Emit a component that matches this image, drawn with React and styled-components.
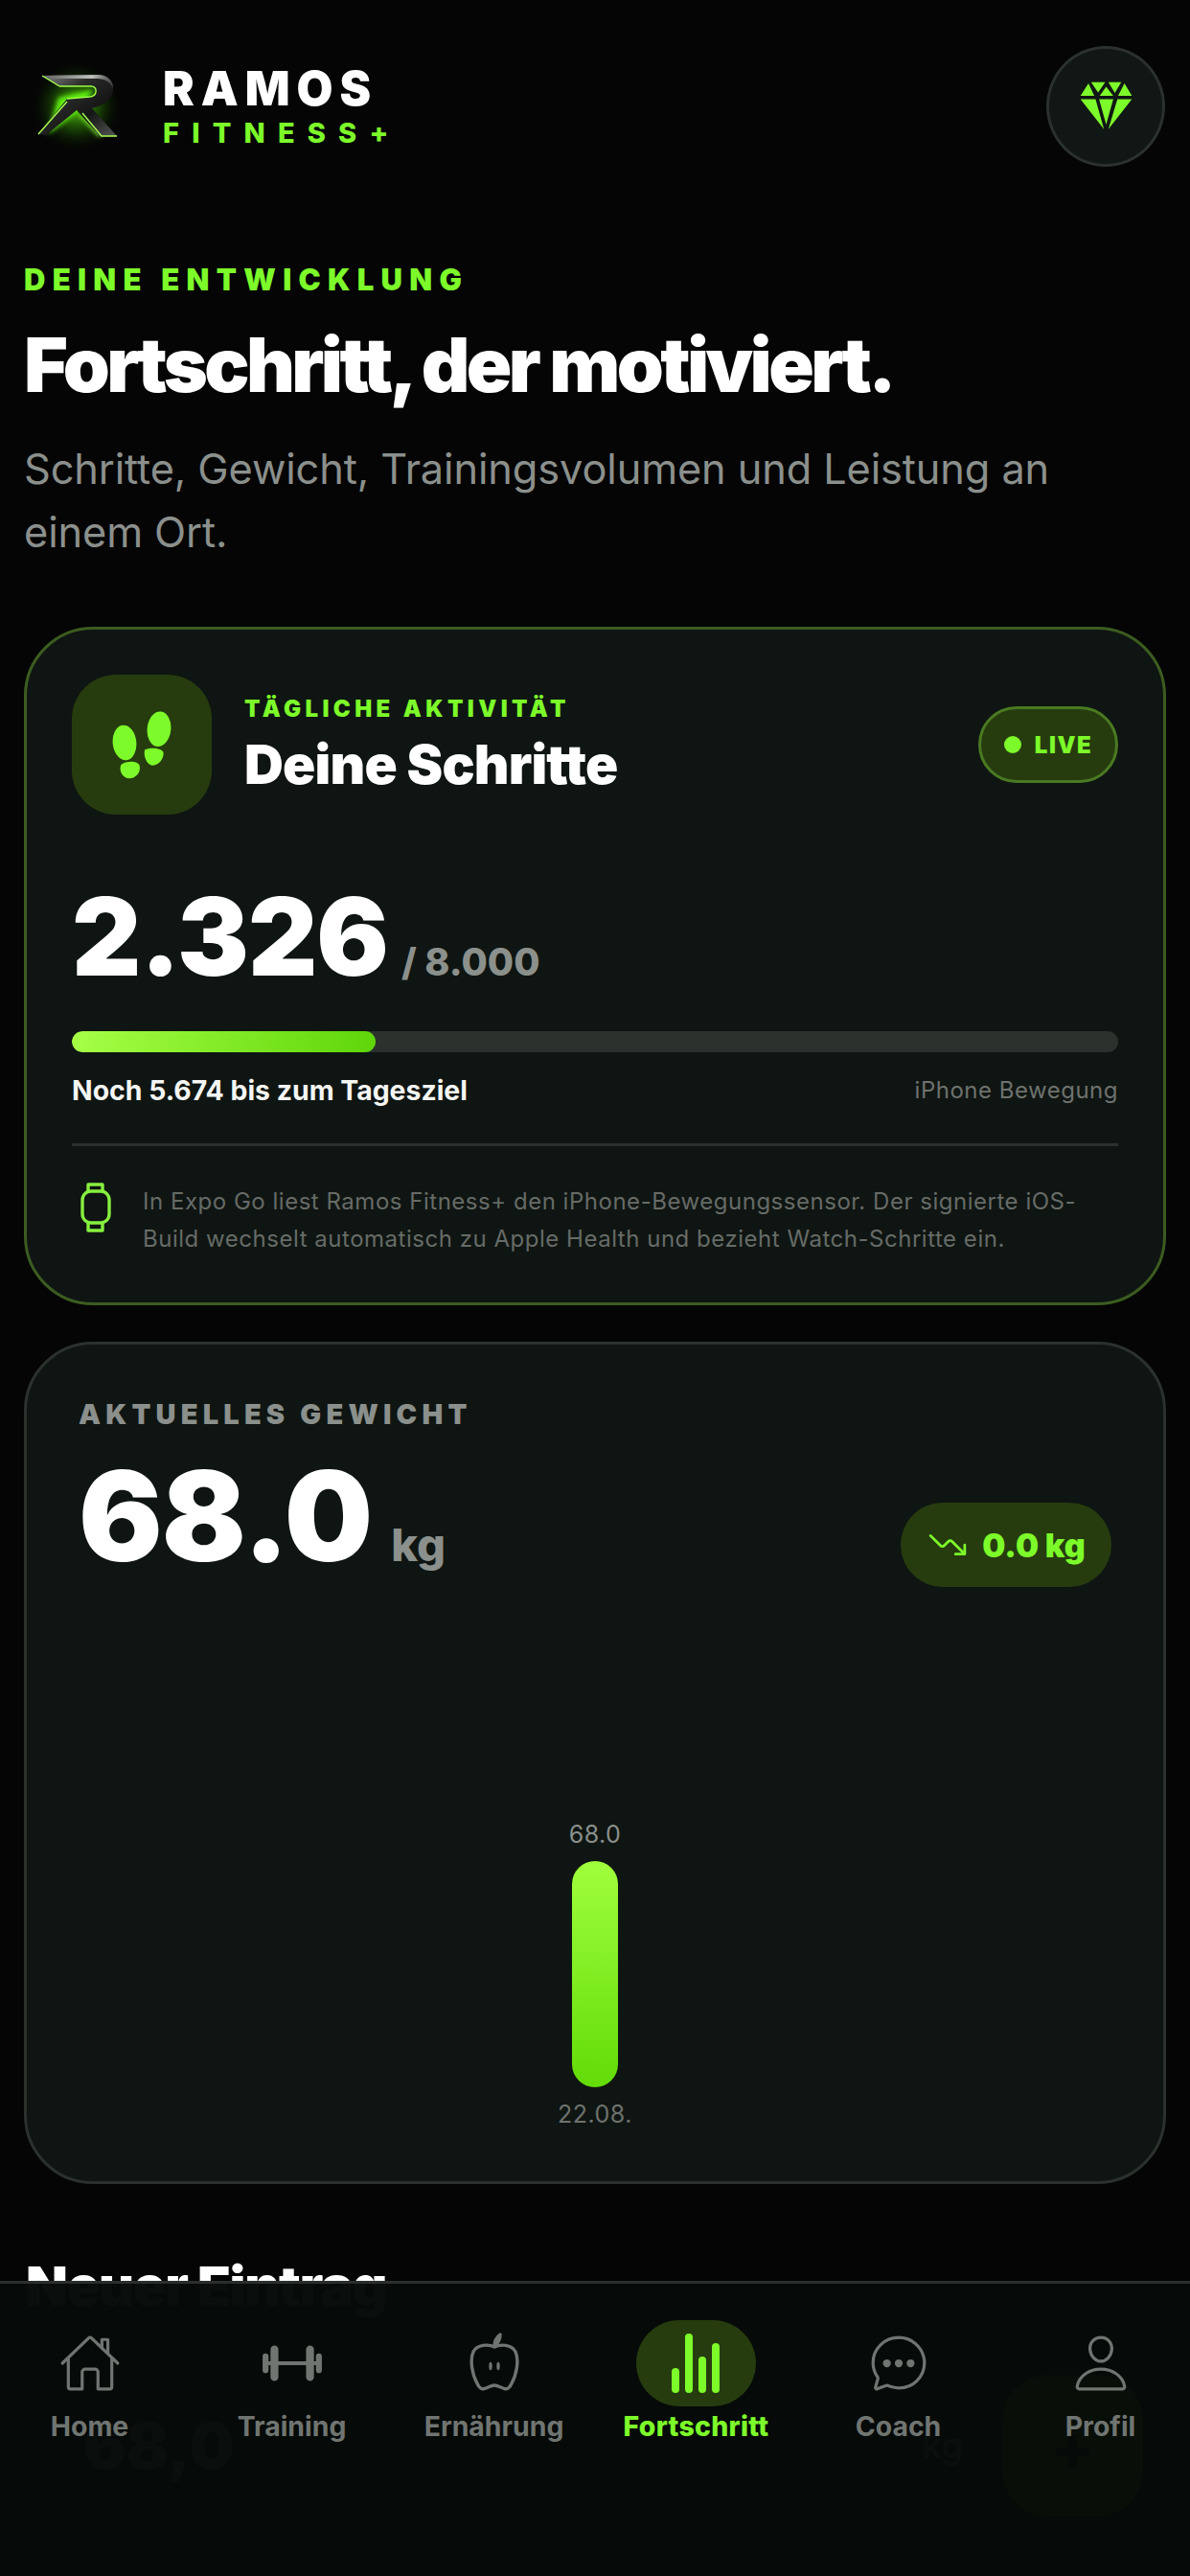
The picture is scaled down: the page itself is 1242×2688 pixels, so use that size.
import React from 'react';
import styled, { createGlobalStyle } from 'styled-components';
import {
  IoBarbellOutline,
  IoChatbubbleEllipsesOutline,
  IoHomeOutline,
  IoPersonOutline,
  IoTrendingDownOutline,
} from 'react-icons/io5';

const GREEN = '#7dfa2a';
const GREY = '#8b908c';
const GREEN_DIM = '#263c0f';

const GlobalStyle = createGlobalStyle`
  html, body { margin: 0; padding: 0; background: #050505; }
  * { box-sizing: border-box; }
  body { font-family: Inter, "Liberation Sans", sans-serif; }
`;

const Screen = styled.div`
  position: relative;
  width: 1242px;
  height: 2688px;
  overflow: hidden;
  background: #050505;
  padding: 48px 25px 0;
`;

const Header = styled.header`
  display: flex;
  align-items: center;
  justify-content: space-between;
`;

const Brand = styled.div`
  display: flex;
  align-items: center;
  gap: 34px;
  padding-left: 3px;
`;

const LogoBox = styled.svg`
  width: 108px;
  height: 108px;
  display: block;
`;

const BrandText = styled.div`
  display: flex;
  flex-direction: column;
  gap: 5px;
`;

const BrandName = styled.div`
  font-size: 49px;
  line-height: 50px;
  font-weight: 900;
  letter-spacing: 7px;
  color: #fff;
`;

const BrandSub = styled.div`
  font-size: 29px;
  line-height: 32px;
  font-weight: 800;
  letter-spacing: 13.2px;
  color: ${GREEN};
`;

const RoundButton = styled.div`
  width: 124px;
  height: 126px;
  margin-right: 1px;
  border-radius: 50%;
  background: #111714;
  border: 3px solid #2b322d;
  display: flex;
  align-items: center;
  justify-content: center;
`;

const Eyebrow = styled.div`
  margin-top: 100px;
  font-size: 31px;
  line-height: 36px;
  font-weight: 900;
  letter-spacing: 7.3px;
  color: ${GREEN};
`;

const Heading = styled.h1`
  margin: 27px 0 0;
  font-size: 78.5px;
  line-height: 88px;
  font-weight: 900;
  letter-spacing: -3.6px;
  color: #fff;
`;

const Lead = styled.p`
  margin: 31px 0 0;
  font-size: 43.3px;
  line-height: 66px;
  font-weight: 400;
  letter-spacing: -0.1px;
  color: ${GREY};
`;

const Card = styled.section`
  margin-top: ${(p) => p.$top}px;
  height: ${(p) => p.$height}px;
  width: 1192px;
  border-radius: 72px;
  background: #0f1512;
  border: 3px solid ${(p) => (p.$accent ? '#3c5c20' : '#2b322d')};
  padding: ${(p) => (p.$accent ? '47px 47px' : '55px 54px')};
  display: flex;
  flex-direction: column;
`;

const StepHead = styled.div`
  display: flex;
  align-items: center;
  gap: 34px;
`;

const IconTile = styled.div`
  width: 146px;
  height: 146px;
  border-radius: 46px;
  background: ${GREEN_DIM};
`;

const StepTitles = styled.div`
  flex: 1;
  display: flex;
  flex-direction: column;
  gap: 12px;
`;

const MiniLabel = styled.div`
  font-size: 24px;
  line-height: 30px;
  font-weight: 900;
  letter-spacing: 4.4px;
  color: ${GREEN};
`;

const StepTitle = styled.div`
  font-size: 56.6px;
  line-height: 62px;
  font-weight: 900;
  letter-spacing: -0.8px;
  color: #fff;
`;

const LivePill = styled.div`
  width: 146px;
  height: 80px;
  border-radius: 40px;
  background: ${GREEN_DIM};
  border: 3px solid #4a7a22;
  display: flex;
  align-items: center;
  justify-content: center;
  gap: 14px;
  color: ${GREEN};
  font-size: 24px;
  font-weight: 900;
  letter-spacing: 1.5px;
`;

const LiveDot = styled.span`
  width: 18px;
  height: 18px;
  border-radius: 50%;
  background: ${GREEN};
`;

const BigRow = styled.div`
  margin-top: ${(p) => p.$top}px;
  display: flex;
  align-items: baseline;
  gap: ${(p) => p.$gap}px;
`;

const BigNumber = styled.div`
  font-size: ${(p) => p.$size}px;
  line-height: ${(p) => p.$size + 10}px;
  font-weight: 900;
  letter-spacing: -1px;
  color: #fff;
`;

const BigUnit = styled.div`
  font-size: ${(p) => p.$size}px;
  font-weight: 800;
  color: ${GREY};
`;

const Track = styled.div`
  margin-top: 38px;
  height: 24px;
  border-radius: 12px;
  background: #2b322d;
  overflow: hidden;
`;

const Fill = styled.div`
  height: 100%;
  border-radius: 12px;
  background: linear-gradient(90deg, #a6ff45, #5fd60a);
`;

const MetaRow = styled.div`
  margin-top: 22px;
  display: flex;
  justify-content: space-between;
  align-items: center;
`;

const MetaStrong = styled.div`
  font-size: 28.4px;
  line-height: 36px;
  font-weight: 700;
  color: #f4f6f3;
`;

const MetaSoft = styled.div`
  font-size: 24px;
  line-height: 32px;
  letter-spacing: 0.5px;
  color: #6d726e;
`;

const Divider = styled.div`
  margin-top: 37px;
  height: 3px;
  background: #2b322d;
`;

const NoteRow = styled.div`
  margin-top: 38px;
  display: flex;
  gap: 24px;
`;

const NoteIcon = styled.svg`
  width: 50px;
  height: 52px;
  flex-shrink: 0;
  display: block;
`;

const NoteText = styled.div`
  font-size: 24px;
  line-height: 39px;
  letter-spacing: 0.52px;
  color: #666b67;
`;

const SmallCaps = styled.div`
  font-size: 29px;
  line-height: 36px;
  font-weight: 900;
  letter-spacing: 5.2px;
  color: ${GREY};
`;

const WeightRow = styled.div`
  display: flex;
  align-items: flex-start;
  justify-content: space-between;
  margin-top: 18px;
`;

const ChangePill = styled.div`
  width: 220px;
  height: 88px;
  border-radius: 44px;
  margin-top: 56px;
  background: ${GREEN_DIM};
  display: flex;
  align-items: center;
  justify-content: center;
  gap: 14px;
  color: ${GREEN};
  font-size: 34px;
  font-weight: 900;
`;

const Chart = styled.div`
  flex: 1;
  display: flex;
  flex-direction: column;
  align-items: center;
  justify-content: flex-end;
`;

const ChartValue = styled.div`
  font-size: 25px;
  line-height: 30px;
  letter-spacing: 0.5px;
  color: ${GREY};
`;

const ChartBar = styled.div`
  width: 48px;
  height: 236px;
  margin-top: 13px;
  border-radius: 24px;
  background: linear-gradient(180deg, #a0ff3c, #62dc08);
`;

const ChartDate = styled.div`
  margin-top: 13px;
  font-size: 25px;
  line-height: 30px;
  letter-spacing: 0.5px;
  color: #6d726e;
`;

const SectionTitle = styled.h2`
  margin: 72px 0 0 2px;
  font-size: 57px;
  line-height: 70px;
  font-weight: 900;
  letter-spacing: -1.2px;
  color: #fff;
`;

const EntryRow = styled.div`
  margin-top: 57px;
  display: flex;
  align-items: center;
  justify-content: space-between;
  padding: 0 24px 0 62px;
`;

const EntryValue = styled.div`
  font-size: 66px;
  font-weight: 900;
  color: #fff;
`;

const EntryRight = styled.div`
  display: flex;
  align-items: center;
  gap: 41px;
  color: #fff;
  font-size: 36px;
  font-weight: 700;
`;

const AddButton = styled.div`
  width: 147px;
  height: 148px;
  border-radius: 48px;
  background: ${GREEN};
  color: #000;
  font-size: 70px;
  display: flex;
  align-items: center;
  justify-content: center;
`;

// sits over the scrolled content, which shows through very faintly
const TabBar = styled.nav`
  position: absolute;
  left: 0;
  right: 0;
  bottom: 0;
  height: 308px;
  background: rgba(6, 10, 8, 0.985);
  border-top: 3px solid #2b2f2c;
  display: grid;
  grid-template-columns: repeat(6, 211px);
  justify-content: center;
  padding-top: 38px;
`;

const Tab = styled.div`
  display: flex;
  flex-direction: column;
  align-items: center;
  color: ${(p) => (p.$active ? GREEN : '#707571')};
`;

const TabIcon = styled.div`
  width: 125px;
  height: 90px;
  border-radius: 45px;
  background: ${(p) => (p.$active ? GREEN_DIM : 'transparent')};
  display: flex;
  align-items: center;
  justify-content: center;
  font-size: 66px;

  svg [stroke-width='32'] {
    stroke-width: ${(p) => (p.$thin ? 25 : 32)};
  }
`;

const TabLabel = styled.div`
  margin-top: 2px;
  font-size: 28.4px;
  line-height: 38px;
  font-weight: ${(p) => (p.$active ? 800 : 700)};
  letter-spacing: ${(p) => (p.$active ? '0.3px' : '0')};
`;

// drawn in the coordinates of the logo crop, the R spans roughly 20..102
const Logo = () => (
  <LogoBox viewBox="8 17 108 108">
    <defs>
      <radialGradient id="halo" cx="50%" cy="50%" r="50%">
        <stop offset="0%" stopColor="#5fe80e" stopOpacity="0.9" />
        <stop offset="50%" stopColor="#2f8a06" stopOpacity="0.45" />
        <stop offset="100%" stopColor="#000" stopOpacity="0" />
      </radialGradient>
      <linearGradient id="metal" x1="0" y1="0" x2="1" y2="1">
        <stop offset="0%" stopColor="#8a8d8a" />
        <stop offset="35%" stopColor="#2a2c2a" />
        <stop offset="65%" stopColor="#141514" />
        <stop offset="100%" stopColor="#555855" />
      </linearGradient>
      <linearGradient id="shine" x1="0" y1="0" x2="1" y2="0">
        <stop offset="0%" stopColor="#5c5f5c" />
        <stop offset="70%" stopColor="#bfc2bf" />
        <stop offset="100%" stopColor="#3a3c3a" />
      </linearGradient>
      <filter id="soft" x="-30%" y="-30%" width="160%" height="160%">
        <feGaussianBlur stdDeviation="2.4" />
      </filter>
    </defs>
    <circle cx="60" cy="71" r="48" fill="url(#halo)" />
    <path d="M41 62 78 53 62 76 30 100z" fill="#5fee0e" filter="url(#soft)" />
    <path d="M64 78 85 101" stroke="#7cf520" strokeWidth="5" filter="url(#soft)" />
    <path
      d="M24 39 82 38C94 38 100 46 98 55 96 65 88 70 76 73L102 102H84L60 75 28 101 20 100 50 63 74 61C82 60 82 50 75 50H42z"
      fill="url(#metal)"
    />
    <path d="M24 39 82 38C92 38 98 44 98 52 94 44 88 42 80 42H30z" fill="url(#shine)" />
    <path d="M42 50H75C82 50 82 60 74 61L50 63" fill="none" stroke="#9dff45" strokeWidth="1.4" />
    <path d="M24 39 42 50M20 100 50 66M66 78 86 102H102" fill="none" stroke="#a8ff50" strokeWidth="1.4" />
  </LogoBox>
);

const DiamondIcon = () => (
  <svg width="57" height="57" viewBox="140 130 170 170" fill={GREEN}>
    <path d="M145 181 170 142 188 181z" />
    <path d="M178 138H222L200 170z" />
    <path d="M205 181 225 152 247 181z" />
    <path d="M232 138H272L252 172z" />
    <path d="M262 181 282 142 305 181z" />
    <path d="M145 191H192L218 284z" />
    <path d="M203 191H247L225 270z" />
    <path d="M260 191H305L232 284z" />
  </svg>
);

const StepsIcon = () => (
  <svg width="146" height="146" viewBox="0 0 438 438" fill={GREEN}>
    <ellipse cx="165" cy="213" rx="37" ry="55" transform="rotate(-6 165 213)" />
    <path d="M154 282C170 270 205 268 212 285 217 305 200 325 180 325 158 325 146 298 154 282z" />
    <ellipse cx="273" cy="170" rx="37" ry="55" transform="rotate(6 273 170)" />
    <path d="M229 235C245 226 285 230 287 245 287 268 268 284 252 284 235 284 222 252 229 235z" />
  </svg>
);

const WatchIcon = () => (
  <NoteIcon viewBox="0 0 50 52" fill="none" stroke="#86f03e" strokeWidth="3.4" strokeLinejoin="round">
    <rect x="11" y="9" width="28" height="33" rx="9" />
    <path d="M17 9V2H32V9M17 42V50H32V42" />
  </NoteIcon>
);

const AppleIcon = () => (
  <svg width="66" height="66" viewBox="0 0 66 66" fill="none" stroke="currentColor" strokeWidth="3.4" strokeLinejoin="round">
    <path d="M33 16c-6-3-18-3-22 5-4 9-1 24 4 33 2 5 5 7 9 5 3-1 6-3 9-3s6 2 9 3c4 2 7 0 9-5 5-9 8-24 4-33-4-8-16-8-22-5z" />
    <path d="M33 15c0-5 2-9 6-12 0 5-2 9-6 12z" fill="currentColor" />
    <ellipse cx="29" cy="36" rx="1.7" ry="4.2" fill="currentColor" stroke="none" />
    <ellipse cx="37" cy="36" rx="1.7" ry="4.2" fill="currentColor" stroke="none" />
  </svg>
);

const BarsIcon = () => (
  <svg width="54" height="62" viewBox="0 0 54 62" fill="currentColor">
    <rect x="1" y="36" width="8" height="26" rx="4" />
    <rect x="15" y="0" width="8" height="62" rx="4" />
    <rect x="29" y="24" width="8" height="38" rx="4" />
    <rect x="43" y="10" width="8" height="52" rx="4" />
  </svg>
);

const tabs = [
  { label: 'Home', icon: <IoHomeOutline />, thin: true },
  { label: 'Training', icon: <IoBarbellOutline /> },
  { label: 'Ernährung', icon: <AppleIcon /> },
  { label: 'Fortschritt', icon: <BarsIcon />, active: true },
  { label: 'Coach', icon: <IoChatbubbleEllipsesOutline />, thin: true },
  { label: 'Profil', icon: <IoPersonOutline />, thin: true },
];

const steps = 2326;
const stepGoal = 8000;

export default function App() {
  return (
    <Screen>
      <GlobalStyle />
      <Header>
        <Brand>
          <Logo />
          <BrandText>
            <BrandName>RAMOS</BrandName>
            <BrandSub>FITNESS+</BrandSub>
          </BrandText>
        </Brand>
        <RoundButton>
          <DiamondIcon />
        </RoundButton>
      </Header>

      <Eyebrow>DEINE ENTWICKLUNG</Eyebrow>
      <Heading>Fortschritt, der motiviert.</Heading>
      <Lead>
        Schritte, Gewicht, Trainingsvolumen und Leistung an
        <br />
        einem Ort.
      </Lead>

      <Card $accent $top={66} $height={708}>
        <StepHead>
          <IconTile>
            <StepsIcon />
          </IconTile>
          <StepTitles>
            <MiniLabel>TÄGLICHE AKTIVITÄT</MiniLabel>
            <StepTitle>Deine Schritte</StepTitle>
          </StepTitles>
          <LivePill>
            <LiveDot />
            LIVE
          </LivePill>
        </StepHead>
        <BigRow $top={66} $gap={14}>
          <BigNumber $size={112}>2.326</BigNumber>
          <BigUnit $size={39.5}>/ 8.000</BigUnit>
        </BigRow>
        <Track>
          <Fill style={{ width: `${(steps / stepGoal) * 100}%` }} />
        </Track>
        <MetaRow>
          <MetaStrong>Noch 5.674 bis zum Tagesziel</MetaStrong>
          <MetaSoft>iPhone Bewegung</MetaSoft>
        </MetaRow>
        <Divider />
        <NoteRow>
          <WatchIcon />
          <NoteText>
            In Expo Go liest Ramos Fitness+ den iPhone-Bewegungssensor. Der signierte iOS-
            <br />
            Build wechselt automatisch zu Apple Health und bezieht Watch-Schritte ein.
          </NoteText>
        </NoteRow>
      </Card>

      <Card $top={38} $height={879}>
        <SmallCaps>AKTUELLES GEWICHT</SmallCaps>
        <WeightRow>
          <BigRow $top={0} $gap={20}>
            <BigNumber $size={130}>68.0</BigNumber>
            <BigUnit $size={47}>kg</BigUnit>
          </BigRow>
          <ChangePill>
            <IoTrendingDownOutline size={44} />
            0.0 kg
          </ChangePill>
        </WeightRow>
        <Chart>
          <ChartValue>68.0</ChartValue>
          <ChartBar />
          <ChartDate>22.08.</ChartDate>
        </Chart>
      </Card>

      <SectionTitle>Neuer Eintrag</SectionTitle>
      <EntryRow>
        <EntryValue>68,0</EntryValue>
        <EntryRight>
          kg
          <AddButton>+</AddButton>
        </EntryRight>
      </EntryRow>

      <TabBar>
        {tabs.map((tab) => (
          <Tab key={tab.label} $active={tab.active}>
            <TabIcon $active={tab.active} $thin={tab.thin}>
              {tab.icon}
            </TabIcon>
            <TabLabel $active={tab.active}>{tab.label}</TabLabel>
          </Tab>
        ))}
      </TabBar>
    </Screen>
  );
}
